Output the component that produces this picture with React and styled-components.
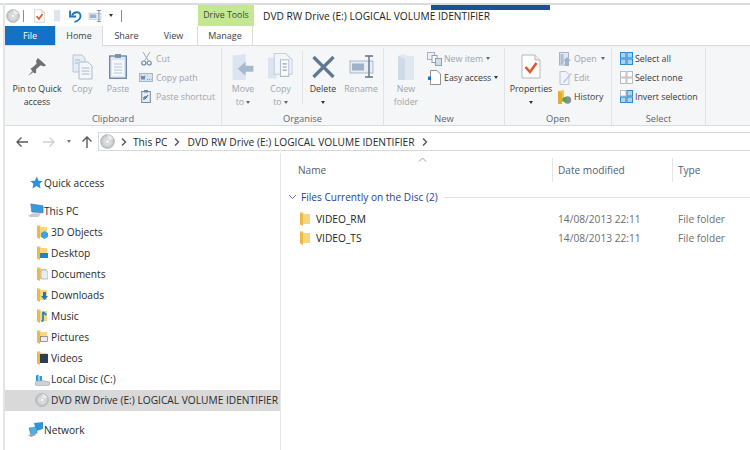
import React from 'react';
import styled, { createGlobalStyle } from 'styled-components';

const GlobalStyle = createGlobalStyle`
  html, body { margin: 0; padding: 0; background: #fff; }
  body { width: 750px; height: 450px; overflow: hidden; font-family: "Open Sans", "Noto Sans", sans-serif; font-size: 10.2px; color: #1e1e1e; }
`;

const Disc = ({ size = 16 }) => (
  <svg width={size} height={size} viewBox="0 0 16 16">
    <defs>
      <radialGradient id="dg" cx="50%" cy="50%" r="55%">
        <stop offset="0%" stopColor="#f4f4f4" />
        <stop offset="60%" stopColor="#cfd2d4" />
        <stop offset="100%" stopColor="#b5b8ba" />
      </radialGradient>
    </defs>
    <circle cx="8" cy="8" r="7.4" fill="url(#dg)" stroke="#a4a7a9" strokeWidth=".6" />
    <path d="M8 1 A7 7 0 0 1 14 5 L9 7.5Z" fill="#e9ebec" />
    <circle cx="8" cy="8" r="2" fill="#fbfbfb" stroke="#a9acae" strokeWidth=".5" />
  </svg>
);

const PropsIcon = ({ w = 11, h = 14, sw = 3 }) => (
  <svg width={w} height={h} viewBox="0 0 20 25">
    <path d="M1 1H14L19 6V24H1Z" fill="#fdfdfd" stroke="#b9b9b9" />
    <path d="M14 1V6H19" fill="#eee" stroke="#b9b9b9" />
    <path d="M4.5 13L9 18L15.5 9" fill="none" stroke="#e2572b" strokeWidth={sw} />
  </svg>
);

const Undo = () => (
  <svg width="13" height="14" viewBox="0 0 13 14">
    <path d="M3 6.5C5 2 12 2 11.5 7.5C11 10.5 8 12.5 5.5 12.8" fill="none" stroke="#1a73c4" strokeWidth="1.8" />
    <path d="M1 1.5V7.5H7" fill="none" stroke="#1a73c4" strokeWidth="1.8" />
  </svg>
);

const RenameGlyph = ({ w = 14, h = 12 }) => (
  <svg width={w} height={h} viewBox="0 0 25 23">
    <rect x="1" y="6" width="23" height="12" fill="#e8edf3" stroke="#a9b8c8" />
    <rect x="3" y="8.5" width="12" height="7" fill="#9db1cb" />
    <path d="M20 1V22M16 1H24M16 22H24" stroke="#5e7289" strokeWidth="1.4" fill="none" />
  </svg>
);

const BookIcon = () => (
  <svg width="9" height="13" viewBox="0 0 10 13">
    <path d="M1 1L8 0V13H1Z" fill="#dbe4ef" />
  </svg>
);

const Pin = () => (
  <svg width="20" height="20" viewBox="0 0 22 22">
    <path d="M12 1L21 9L18.5 10.5L15 9L10 13.5L10 17.5L8 18L3.8 13L6 11.5L10.5 7.5L10 4Z" fill="#6e7072" />
    <path d="M6 15L1 21L7.5 16.5Z" fill="#85878a" />
  </svg>
);

const DocStack = ({ w = 21, h = 26 }) => (
  <svg width={w} height={h} viewBox="0 0 21 26">
    <path d="M1 1H10L13 4V18H1Z" fill="#e6ecf4" stroke="#b8c6d8" />
    <path d="M7 8H16L20 12V25H7Z" fill="#f4f7fa" stroke="#aabbd0" />
    <path d="M9.5 14H17.5M9.5 17H17.5M9.5 20H17.5M3 6H8M3 9H6" stroke="#a8b8cc" />
  </svg>
);

const Clipboard = () => (
  <svg width="18" height="25" viewBox="0 0 18 25">
    <rect x=".7" y="2" width="16.6" height="22.3" fill="#dde7f2" stroke="#65809f" strokeWidth="1.3" />
    <rect x="3" y="6" width="12" height="16" fill="#f4f7fb" />
    <rect x="6" y="0" width="6" height="4" fill="#7b93ae" />
    <path d="M5 10H13M5 13H13M5 16H13M5 19H13" stroke="#bac8d8" />
  </svg>
);

const Scissors = () => (
  <svg width="11" height="14" viewBox="0 0 11 14">
    <path d="M2 0L7.5 9M9 0L3.5 9" stroke="#9ba8b6" strokeWidth="1" fill="none" />
    <circle cx="2.8" cy="11" r="2" fill="none" stroke="#6c89a8" strokeWidth="1.2" />
    <circle cx="8.2" cy="11" r="2" fill="none" stroke="#6c89a8" strokeWidth="1.2" />
  </svg>
);

const CopyPathIcon = () => (
  <svg width="14" height="9" viewBox="0 0 14 9">
    <rect x=".5" y=".5" width="13" height="8" fill="#d6e2ef" stroke="#a5b9ce" />
    <path d="M2 2.5L3 6.5L4 3L5 6.5L6 2.5M8 6.5H8.8M10 6.5H10.8M12 6.5H12.5" stroke="#4e6a88" strokeWidth=".8" fill="none" />
  </svg>
);

const ShortcutIcon = () => (
  <svg width="10" height="13" viewBox="0 0 10 13">
    <rect x=".7" y="1.5" width="8.6" height="11" fill="#e6edf5" stroke="#6f8aa8" />
    <rect x="3" y="0" width="4" height="2.5" fill="#6f8aa8" />
    <path d="M3 10V7H6M4 9L7 5" stroke="#38587c" fill="none" />
  </svg>
);

const MoveTo = () => (
  <svg width="24" height="26" viewBox="0 0 24 30">
    <path d="M0 2L15 0V30H0Z" fill="#dbe4f0" />
    <path d="M6 17L15 9V13.5H24V20.5H15V25Z" fill="#a8b9cd" />
  </svg>
);

const CopyTo = () => (
  <svg width="25" height="28" viewBox="0 0 24 26">
    <path d="M0 4H8V24H0Z" fill="#dbe4f0" />
    <path d="M6 0H17L23 6V20H6Z" fill="#f2f5f9" stroke="#c2cfdd" />
    <path d="M12 6H20V22H12Z" fill="#f8fafc" stroke="#aebed0" />
    <path d="M14 10H18M14 13H18M14 16H18" stroke="#8ea2b9" />
  </svg>
);

const DeleteX = () => (
  <svg width="25" height="24" viewBox="0 0 24 24">
    <path d="M2 2L22 22M22 2L2 22" stroke="#5f7894" strokeWidth="3.2" />
  </svg>
);

const NewFolderIcon = () => (
  <svg width="17" height="26" viewBox="0 0 17 26">
    <path d="M0 2L5 0L10 2H16V26H0Z" fill="#dfe7f1" />
    <path d="M0 2L7 5V26H0Z" fill="#d0dbe8" />
  </svg>
);

const NewItemIcon = () => (
  <svg width="15" height="14" viewBox="0 0 15 14">
    <rect x=".5" y=".5" width="7" height="7" fill="#eef2f7" stroke="#a3b4c6" />
    <rect x="5" y="3.5" width="5" height="7" fill="#fff" stroke="#8ca1b8" />
    <rect x="8.5" y="6.5" width="6" height="7" fill="#d3deeb" stroke="#8ca1b8" />
  </svg>
);

const EasyAccess = () => (
  <svg width="13" height="15" viewBox="0 0 13 15">
    <path d="M2.5.5H9L12.5 4V14.5H2.5Z" fill="#fff" stroke="#777" strokeWidth=".8" />
    <path d="M0 6.5H3V10H0Z" fill="#1f78c8" />
  </svg>
);

const OpenIcon = () => (
  <svg width="13" height="14" viewBox="0 0 13 14">
    <rect x=".5" y=".5" width="9" height="12.5" fill="#dfe7f1" stroke="#a5b5c7" />
    <rect x="1.5" y="2" width="3" height="10" fill="#aebed1" />
    <path d="M6 14V9H4L8 5L12 9H10V14Z" fill="#9fb2c8" />
  </svg>
);

const EditIcon = () => (
  <svg width="13" height="14" viewBox="0 0 13 14">
    <path d="M1 .5H7L10 3.5V13.5H1Z" fill="#f0f4f8" stroke="#b7c5d5" />
    <path d="M4 11L12 2L12.8 3L5 12Z" fill="#b8c8da" />
  </svg>
);

const HistoryIcon = () => (
  <svg width="14" height="14" viewBox="0 0 14 14">
    <path d="M0 1L6 0V12H0Z" fill="#f3c64e" />
    <path d="M0 1L4 3V14H0Z" fill="#e0ab2e" />
    <circle cx="9.5" cy="10" r="3.7" fill="#8b8f93" />
    <circle cx="6.5" cy="9.5" r="2.2" fill="#3fae49" />
  </svg>
);

const GridIcon = ({ cells, line, fill }) => (
  <svg width="13" height="13" viewBox="0 0 13 13">
    {[0, 1, 2, 3].map((i) => (
      <rect
        key={i}
        x={i % 2 ? 7 : 0.5}
        y={i > 1 ? 7 : 0.5}
        width="5.5"
        height="5.5"
        fill={cells[i] ? fill : '#fff'}
        stroke={cells[i] ? line : '#b9bcc0'}
      />
    ))}
  </svg>
);

const Star = () => (
  <svg width="13" height="13" viewBox="0 0 13 13">
    <path d="M6.8.5L8.6 4.7L12.8 5L9.6 7.8L10.6 12.5L6.5 10L2.4 12.5L3.4 7.8L.2 5L4.9 4.7Z" fill="#2e8fdc" />
  </svg>
);

const PcIcon = () => (
  <svg width="17" height="15" viewBox="0 0 17 15">
    <path d="M3 .5L16 2.5V10L4 9Z" fill="#3a9ad9" stroke="#2f6f9f" strokeWidth=".6" />
    <path d="M0 13L5 10.5H14L11 14.5H2Z" fill="#c6cbd0" />
  </svg>
);

const Folder = ({ children }) => (
  <svg width="11" height="14" viewBox="0 0 11 14">
    <path d="M0 .5L3 0L4 2H10V12H0Z" fill="#f6d77e" />
    <path d="M0 .5L3 2V14L0 12.5Z" fill="#e9b949" />
    {children}
  </svg>
);

const folderBadges = {
  cube: <path d="M4 8L7.5 6L11 8V12L7.5 14L4 12Z" fill="#3aa2dc" />,
  desk: <rect x="3" y="7" width="8" height="5" fill="#1d84d2" />,
  docs: <path d="M4 3H9L11 5V12H4Z" fill="#e7edf3" stroke="#8aa0b6" strokeWidth=".6" />,
  down: <path d="M6 4H9V8H11L7.5 12L4 8H6Z" fill="#1d75c4" />,
  music: <path d="M6 3V11.5L4.5 12.5M6 3L9.5 6" stroke="#1d84d2" strokeWidth="1.8" fill="none" />,
  pics: <rect x="3.5" y="6.5" width="7" height="5" fill="#e7edf3" stroke="#667" strokeWidth=".6" />,
  vids: <rect x="3" y="3" width="8" height="9" fill="#2c3f56" />,
};

const DriveIcon = () => (
  <svg width="15" height="13" viewBox="0 0 15 13">
    <path d="M1 2.5L3.5 1.5V8H1ZM4.5 3H7V8H4.5Z" fill="#2d9ae0" />
    <path d="M0 9L7 7.5L15 9V12L7 13L0 12Z" fill="#cfd3d7" stroke="#8f9499" strokeWidth=".5" />
  </svg>
);

const NetworkIcon = () => (
  <svg width="16" height="15" viewBox="0 0 16 15">
    <path d="M6 1L15 0V7L8 9Z" fill="#2f95d6" />
    <path d="M1 6L9 5V11L3 13Z" fill="#4fb0e6" stroke="#2d6f9c" strokeWidth=".5" />
    <path d="M0 13L6 11.5L8 13L3 15Z" fill="#9aa0a6" />
  </svg>
);

const Window = styled.div`
  box-sizing: border-box;
  position: relative;
  width: 750px;
  height: 450px;
  padding: 5px 0 0 5px;
  display: flex;
  flex-direction: column;
  background: #fff;
  overflow: hidden;
  &::before {
    content: '';
    position: absolute;
    inset: 3px 0 auto 0;
    height: 2px;
    background: #dcdcdc;
  }
  &::after {
    content: '';
    position: absolute;
    inset: 3px auto 0 3px;
    width: 2px;
    background: #e4e4e4;
  }
`;

const TitleStrip = styled.div`
  position: absolute;
  top: 5px;
  left: 431px;
  width: 119px;
  height: 5px;
  background: #1f4f9c;
`;

const TitleBar = styled.div`
  display: flex;
  align-items: center;
  height: 21px;
`;

const QuickTools = styled.div`
  display: flex;
  align-items: center;
  width: 192px;
  flex: none;
  padding-left: 1px;
`;

const QuickSlot = styled.span`
  display: inline-flex;
  align-items: center;
  justify-content: center;
  width: ${(p) => p.$w}px;
`;

const ThinRule = styled.span`
  display: inline-block;
  width: 1px;
  height: 12px;
  background: #8d8d8d;
  margin: 0 ${(p) => p.$gap || 0}px;
`;

const Caret = styled.span`
  display: inline-block;
  width: 0;
  height: 0;
  border-left: 2.5px solid transparent;
  border-right: 2.5px solid transparent;
  border-top: 3px solid ${(p) => p.$color || '#444'};
  margin-left: ${(p) => p.$ml || 0}px;
  vertical-align: middle;
`;

const DriveToolsTab = styled.div`
  width: 56px;
  height: 21px;
  line-height: 20px;
  text-align: center;
  background: #c3e891;
  color: #3c4a30;
  font-size: 8.8px;
  flex: none;
`;

const WindowTitle = styled.div`
  margin-left: 9px;
  font-size: 10.2px;
  color: #222;
  white-space: nowrap;
`;

const TabRow = styled.div`
  display: flex;
  height: 20px;
  border-bottom: 1px solid #dadbdc;
  box-sizing: border-box;
`;

const FileTab = styled.div`
  width: 50px;
  background: #1372c4;
  color: #fff;
  text-align: center;
  line-height: 20px;
  font-size: 9px;
`;

const Tab = styled.div`
  box-sizing: border-box;
  width: ${(p) => p.$w}px;
  height: ${(p) => (p.$active ? 20 : 19)}px;
  text-align: center;
  line-height: 20px;
  font-size: 9px;
  color: #3d3d3d;
  background: ${(p) => (p.$active ? '#f5f6f7' : '#fff')};
  border-left: ${(p) => (p.$active || p.$framed ? '1px solid #dadbdc' : 'none')};
  border-right: ${(p) => (p.$active || p.$framed ? '1px solid #dadbdc' : 'none')};
`;

const Ribbon = styled.div`
  display: flex;
  height: 80px;
  background: #f5f6f7;
  border-bottom: 1px solid #dadbdc;
  box-sizing: border-box;
`;

const Group = styled.div`
  box-sizing: border-box;
  width: ${(p) => p.$w}px;
  flex: none;
  display: flex;
  flex-direction: column;
  margin: 2px 0 0;
  border-right: 1px solid #e1e3e6;
`;

const GroupBody = styled.div`
  flex: 1;
  display: flex;
  min-height: 0;
  padding-left: ${(p) => p.$pl || 0}px;
`;

const GroupLabel = styled.div`
  height: 15px;
  text-align: center;
  font-size: 9.3px;
  line-height: 17px;
  color: #5c6670;
`;

const BigButton = styled.div`
  width: ${(p) => p.$w}px;
  flex: none;
  display: flex;
  flex-direction: column;
  align-items: center;
  font-size: 8.8px;
  line-height: 13px;
  text-align: center;
  white-space: nowrap;
  color: ${(p) => (p.$off ? '#a0a5ab' : '#3a3a3a')};
`;

const BigIcon = styled.div`
  box-sizing: border-box;
  height: 35px;
  padding-top: 2px;
  display: flex;
  align-items: center;
  justify-content: center;
  flex: none;
`;

const BigLabel = styled.div``;

const InnerRule = styled.div`
  width: 1px;
  height: 53px;
  margin: 3px 0 0 3px;
  background: #e1e3e6;
  flex: none;
`;

const SmallStack = styled.div`
  display: flex;
  flex-direction: column;
  padding-top: 1px;
  margin-left: ${(p) => p.$ml || 0}px;
`;

const SmallRow = styled.div`
  display: flex;
  align-items: center;
  height: 19px;
  font-size: 8.8px;
  color: ${(p) => (p.$off ? '#a0a5ab' : '#3a3a3a')};
  white-space: nowrap;
`;

const SmallIcon = styled.span`
  display: inline-flex;
  justify-content: center;
  width: ${(p) => p.$w || 16}px;
  margin-right: ${(p) => p.$mr || 0}px;
  flex: none;
`;

const NavRow = styled.div`
  box-sizing: border-box;
  display: flex;
  align-items: center;
  height: 27px;
  padding-top: 4px;
`;

const NavGlyphs = styled.div`
  width: 93px;
  flex: none;
  display: flex;
  align-items: center;
`;

const NavSlot = styled.span`
  display: inline-flex;
  justify-content: center;
  width: ${(p) => p.$w}px;
`;

const AddressBar = styled.div`
  flex: 1;
  box-sizing: border-box;
  height: 19px;
  display: flex;
  align-items: center;
  border: 1px solid #d9d9d9;
  border-right: none;
  padding-left: 1px;
  font-size: 10.2px;
  color: #2a2a2a;
  white-space: nowrap;
`;

const Crumb = styled.span``;

const CrumbArrow = styled.svg`
  width: 10px;
  height: 10px;
  flex: none;
  margin: 0 ${(p) => p.$r}px 0 ${(p) => p.$l}px;
`;

const Panes = styled.div`
  flex: 1;
  display: flex;
  min-height: 0;
`;

const Sidebar = styled.nav`
  box-sizing: border-box;
  width: 276px;
  flex: none;
  padding-top: 19px;
  border-right: 1px solid #e6e6e6;
  overflow: hidden;
`;

const NavItem = styled.div`
  display: flex;
  align-items: center;
  height: 21.1px;
  padding-left: ${(p) => (p.$top ? 23 : 28)}px;
  margin-top: ${(p) => p.$mt || 0}px;
  background: ${(p) => (p.$selected ? '#d9d9d9' : 'transparent')};
  font-size: 10.2px;
  color: #2a2a2a;
  white-space: nowrap;
`;

const NavIcon = styled.span`
  display: inline-flex;
  justify-content: center;
  align-items: center;
  width: ${(p) => (p.$top ? 16 : 18)}px;
  flex: none;
`;

const Content = styled.main`
  flex: 1;
  min-width: 0;
  position: relative;
`;

const SortMark = styled.svg`
  position: absolute;
  top: 4px;
  left: 137px;
  width: 9px;
  height: 5px;
`;

const Columns = styled.div`
  display: grid;
  grid-template-columns: 271px 120px 1fr;
  height: 24px;
  margin-top: 5px;
  font-size: 10.1px;
  color: #51606f;
  line-height: 24px;
`;

const Column = styled.div`
  padding-left: ${(p) => p.$pl}px;
  border-left: ${(p) => (p.$rule ? '1px solid #e5e5e5' : 'none')};
`;

const FileGroup = styled.div`
  display: flex;
  align-items: center;
  height: 20px;
  margin-top: 5px;
  padding-left: 7px;
  color: #2a3d96;
  font-size: 10.1px;
`;

const GroupChevron = styled.svg`
  width: 9px;
  height: 6px;
  margin-right: 4px;
  flex: none;
`;

const GroupRule = styled.div`
  flex: 1;
  height: 1px;
  margin-left: 6px;
  background: #e0e3ea;
`;

const FileRows = styled.div`
  padding-top: 2px;
`;

const FileRow = styled.div`
  display: grid;
  grid-template-columns: 271px 120px 1fr;
  height: 19px;
  align-items: center;
  font-size: 10.2px;
`;

const FileName = styled.div`
  display: flex;
  align-items: center;
  padding-left: 19px;
  color: #222;
`;

const FileMeta = styled.div`
  padding-left: ${(p) => p.$pl}px;
  color: #6d6d6d;
`;

const FolderGlyph = styled.span`
  display: inline-flex;
  width: 12px;
  margin-right: 4px;
`;

const Chevron = ({ l, r }) => (
  <CrumbArrow $l={l} $r={r} viewBox="0 0 10 10">
    <path d="M3 1.5L6.5 5L3 8.5" fill="none" stroke="#555" strokeWidth="1.4" />
  </CrumbArrow>
);

const Arrow = ({ flip, color }) => (
  <svg width="14" height="12" viewBox="0 0 14 12" style={flip ? { transform: 'scaleX(-1)' } : undefined}>
    <path d="M13 6H2M6.5 1.5L2 6L6.5 10.5" fill="none" stroke={color} strokeWidth="1.4" />
  </svg>
);

const places = [
  ['3D Objects', 'cube'],
  ['Desktop', 'desk'],
  ['Documents', 'docs'],
  ['Downloads', 'down'],
  ['Music', 'music'],
  ['Pictures', 'pics'],
  ['Videos', 'vids'],
];

const files = ['VIDEO_RM', 'VIDEO_TS'];
const driveName = 'DVD RW Drive (E:) LOGICAL VOLUME IDENTIFIER';

export default function App() {
  return (
    <Window>
      <GlobalStyle />
      <TitleStrip />
      <TitleBar>
        <QuickTools>
          <Disc size={14} />
          <ThinRule $gap={3} />
          <QuickSlot $w={24}><PropsIcon /></QuickSlot>
          <QuickSlot $w={12}><BookIcon /></QuickSlot>
          <QuickSlot $w={24}><Undo /></QuickSlot>
          <QuickSlot $w={16}><RenameGlyph /></QuickSlot>
          <QuickSlot $w={15}><Caret $color="#333" /></QuickSlot>
          <ThinRule $gap={3} />
        </QuickTools>
        <DriveToolsTab>Drive Tools</DriveToolsTab>
        <WindowTitle>{driveName}</WindowTitle>
      </TitleBar>
      <TabRow>
        <FileTab>File</FileTab>
        <Tab $w={48} $active>Home</Tab>
        <Tab $w={47}>Share</Tab>
        <Tab $w={47}>View</Tab>
        <Tab $w={56} $framed>Manage</Tab>
      </TabRow>
      <Ribbon>
        <Group $w={217}>
          <GroupBody $pl={4}>
            <BigButton $w={56}><BigIcon><Pin /></BigIcon><BigLabel>Pin to Quick<br />access</BigLabel></BigButton>
            <BigButton $w={34} $off><BigIcon><DocStack /></BigIcon><BigLabel>Copy</BigLabel></BigButton>
            <BigButton $w={38} $off><BigIcon><Clipboard /></BigIcon><BigLabel>Paste</BigLabel></BigButton>
            <SmallStack $ml={1}>
              <SmallRow $off><SmallIcon $mr={2}><Scissors /></SmallIcon>Cut</SmallRow>
              <SmallRow $off><SmallIcon $mr={2}><CopyPathIcon /></SmallIcon>Copy path</SmallRow>
              <SmallRow $off><SmallIcon $mr={2}><ShortcutIcon /></SmallIcon>Paste shortcut</SmallRow>
            </SmallStack>
          </GroupBody>
          <GroupLabel>Clipboard</GroupLabel>
        </Group>
        <Group $w={162}>
          <GroupBody $pl={2}>
            <BigButton $w={38} $off><BigIcon><MoveTo /></BigIcon><BigLabel>Move<br />to <Caret $color="#666" /></BigLabel></BigButton>
            <BigButton $w={37} $off><BigIcon><CopyTo /></BigIcon><BigLabel>Copy<br />to <Caret $color="#666" /></BigLabel></BigButton>
            <InnerRule />
            <BigButton $w={40}><BigIcon><DeleteX /></BigIcon><BigLabel>Delete<br /><Caret $color="#333" /></BigLabel></BigButton>
            <BigButton $w={36} $off><BigIcon><RenameGlyph w={25} h={23} /></BigIcon><BigLabel>Rename</BigLabel></BigButton>
          </GroupBody>
          <GroupLabel>Organise</GroupLabel>
        </Group>
        <Group $w={121}>
          <GroupBody $pl={1}>
            <BigButton $w={42} $off><BigIcon><NewFolderIcon /></BigIcon><BigLabel>New<br />folder</BigLabel></BigButton>
            <SmallStack>
              <SmallRow $off><SmallIcon $w={15} $mr={2}><NewItemIcon /></SmallIcon>New item<Caret $color="#666" $ml={3} /></SmallRow>
              <SmallRow><SmallIcon $w={15} $mr={2}><EasyAccess /></SmallIcon>Easy access<Caret $color="#333" $ml={3} /></SmallRow>
            </SmallStack>
          </GroupBody>
          <GroupLabel>New</GroupLabel>
        </Group>
        <Group $w={107}>
          <GroupBody $pl={2}>
            <BigButton $w={48}><BigIcon><PropsIcon w={20} h={25} sw={2.6} /></BigIcon><BigLabel>Properties<br /><Caret $color="#333" /></BigLabel></BigButton>
            <SmallStack $ml={3}>
              <SmallRow $off><SmallIcon $w={14} $mr={2}><OpenIcon /></SmallIcon>Open<Caret $color="#666" $ml={4} /></SmallRow>
              <SmallRow $off><SmallIcon $w={14} $mr={2}><EditIcon /></SmallIcon>Edit</SmallRow>
              <SmallRow><SmallIcon $w={14} $mr={2}><HistoryIcon /></SmallIcon>History</SmallRow>
            </SmallStack>
          </GroupBody>
          <GroupLabel>Open</GroupLabel>
        </Group>
        <Group $w={94}>
          <GroupBody $pl={6}>
            <SmallStack>
              <SmallRow><SmallIcon $mr={1}><GridIcon cells={[1, 1, 1, 1]} line="#2b8ad6" fill="#a9d3f3" /></SmallIcon>Select all</SmallRow>
              <SmallRow><SmallIcon $mr={1}><GridIcon cells={[0, 0, 0, 0]} /></SmallIcon>Select none</SmallRow>
              <SmallRow><SmallIcon $mr={1}><GridIcon cells={[0, 1, 1, 1]} line="#2b8ad6" fill="#a9d3f3" /></SmallIcon>Invert selection</SmallRow>
            </SmallStack>
          </GroupBody>
          <GroupLabel>Select</GroupLabel>
        </Group>
      </Ribbon>
      <NavRow>
        <NavGlyphs>
          <NavSlot $w={34}><Arrow color="#5b5b5b" /></NavSlot>
          <NavSlot $w={20}><Arrow flip color="#d0d0d0" /></NavSlot>
          <NavSlot $w={20}><Caret $color="#777" /></NavSlot>
          <NavSlot $w={16}>
            <svg width="12" height="13" viewBox="0 0 12 13">
              <path d="M6 13V2M1.5 6.5L6 2L10.5 6.5" fill="none" stroke="#5b5b5b" strokeWidth="1.4" />
            </svg>
          </NavSlot>
        </NavGlyphs>
        <AddressBar>
          <Disc size={15} />
          <Chevron l={4} r={4} />
          <Crumb>This PC</Crumb>
          <Chevron l={5} r={5} />
          <Crumb>{driveName}</Crumb>
          <Chevron l={5} r={0} />
        </AddressBar>
      </NavRow>
      <Panes>
        <Sidebar>
          <NavItem $top><NavIcon $top><Star /></NavIcon>Quick access</NavItem>
          <NavItem $top $mt={7}><NavIcon $top><PcIcon /></NavIcon>This PC</NavItem>
          {places.map(([label, badge]) => (
            <NavItem key={label}>
              <NavIcon><Folder>{folderBadges[badge]}</Folder></NavIcon>{label}
            </NavItem>
          ))}
          <NavItem><NavIcon><DriveIcon /></NavIcon>Local Disc (C:)</NavItem>
          <NavItem $selected><NavIcon><Disc size={14} /></NavIcon>{driveName}</NavItem>
          <NavItem $top $mt={8}><NavIcon $top><NetworkIcon /></NavIcon>Network</NavItem>
        </Sidebar>
        <Content>
          <SortMark viewBox="0 0 9 5">
            <path d="M1 4.5L4.5 1L8 4.5" fill="none" stroke="#9a9a9a" />
          </SortMark>
          <Columns>
            <Column $pl={17}>Name</Column>
            <Column $pl={5} $rule>Date modified</Column>
            <Column $pl={5} $rule>Type</Column>
          </Columns>
          <FileGroup>
            <GroupChevron viewBox="0 0 9 6">
              <path d="M1 1L4.5 4.5L8 1" fill="none" stroke="#6f7f92" />
            </GroupChevron>
            Files Currently on the Disc (2)
            <GroupRule />
          </FileGroup>
          <FileRows>
            {files.map((name) => (
              <FileRow key={name}>
                <FileName><FolderGlyph><Folder /></FolderGlyph>{name}</FileName>
                <FileMeta $pl={6}>14/08/2013 22:11</FileMeta>
                <FileMeta $pl={6}>File folder</FileMeta>
              </FileRow>
            ))}
          </FileRows>
        </Content>
      </Panes>
    </Window>
  );
}
